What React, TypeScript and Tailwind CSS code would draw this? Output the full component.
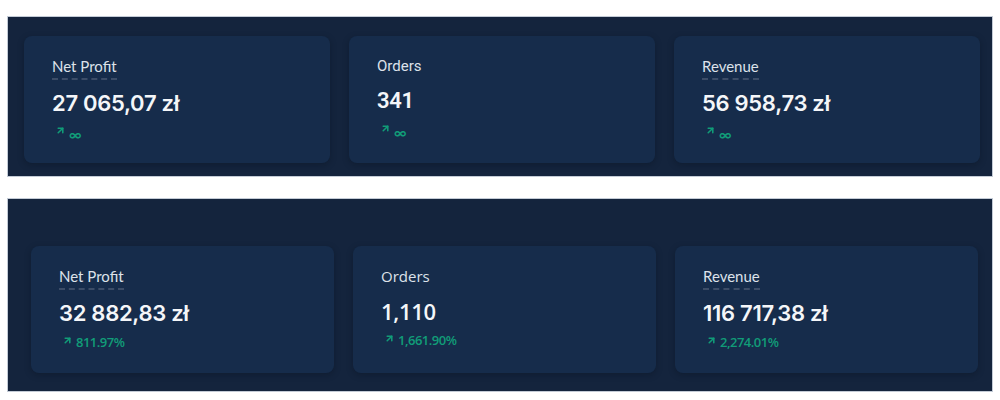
import { ArrowUpRight } from 'lucide-react';

type Stat = {
  label: string;
  value: string;
  trend: string;
  dashed?: boolean;
  labelFont: string;
  valueFont: string;
};

const topStats: Stat[] = [
  { label: 'Net Profit', value: '27 065,07 zł', trend: '∞', dashed: true, labelFont: 'font-[Lato,sans-serif]', valueFont: 'font-[Inter,sans-serif]' },
  { label: 'Orders', value: '341', trend: '∞', labelFont: 'font-[Roboto,sans-serif]', valueFont: 'font-[Roboto,sans-serif]' },
  { label: 'Revenue', value: '56 958,73 zł', trend: '∞', dashed: true, labelFont: 'font-[Lato,sans-serif]', valueFont: 'font-[Inter,sans-serif]' },
];

const bottomStats: Stat[] = [
  { label: 'Net Profit', value: '32 882,83 zł', trend: '811.97%', dashed: true, labelFont: 'font-[Lato,sans-serif]', valueFont: 'font-[Inter,sans-serif]' },
  { label: 'Orders', value: '1,110', trend: '1,661.90%', labelFont: 'font-["Open_Sans",sans-serif]', valueFont: 'font-["Open_Sans",sans-serif]' },
  { label: 'Revenue', value: '116 717,38 zł', trend: '2,274.01%', dashed: true, labelFont: 'font-[Lato,sans-serif]', valueFont: 'font-[Inter,sans-serif]' },
];

function StatCard({ stat, infinite }: { stat: Stat; infinite: boolean }) {
  return (
    <div className="flex-1 h-[127px] rounded-lg bg-[#162c4b] shadow-[0_2px_6px_rgba(8,16,30,0.35)] px-[28px] pt-[20px] flex flex-col items-start">
      <span
        className={
          stat.dashed
            ? `${stat.labelFont} text-[15px] leading-[20px] text-[#dde2ea] pb-[2px] border-b-2 border-dashed border-[#3c4d68]`
            : `${stat.labelFont} text-[15px] leading-[20px] text-[#dde2ea] pb-[2px]`
        }
      >
        {stat.label}
      </span>
      <span className={`${stat.valueFont} mt-[9px] text-[22px] leading-[28px] font-semibold text-[#f4f6f9] tracking-[-0.3px]`}>
        {stat.value}
      </span>
      {infinite ? (
        <div className="mt-[8px] ml-[3px] flex items-start gap-[3px] text-[#119c78]">
          <ArrowUpRight size={11} strokeWidth={3.4} className="mt-[0px]" />
          <span className="font-[Inter,sans-serif] text-[13px] leading-[14px] mt-[3px] font-semibold">∞</span>
        </div>
      ) : (
        <div className="mt-[7px] ml-[3px] flex items-start gap-[3px] text-[#119c78]">
          <ArrowUpRight size={11} strokeWidth={3.4} className="mt-[1px]" />
          <span className="font-['Open_Sans',sans-serif] text-[13px] leading-[17px] font-semibold tracking-[-0.5px]">
            {stat.trend}
          </span>
        </div>
      )}
    </div>
  );
}

export default function App() {
  return (
    <div className="w-[1000px] h-[400px] bg-white px-[7px] pt-[16px] flex flex-col gap-[21px]">
      {/* Top panel */}
      <section className="h-[161px] w-[986px] bg-[#14243d] border border-[#c3cbd6] pl-[16px] pr-[12px] pt-[19px] flex gap-[19px]">
        {topStats.map((s) => (
          <StatCard key={s.label} stat={s} infinite />
        ))}
      </section>

      {/* Bottom panel */}
      <section className="h-[194px] w-[986px] bg-[#14243d] border border-[#c3cbd6] pl-[23px] pr-[14px] pt-[47px] flex gap-[19px]">
        {bottomStats.map((s) => (
          <StatCard key={s.label} stat={s} infinite={false} />
        ))}
      </section>
    </div>
  );
}
